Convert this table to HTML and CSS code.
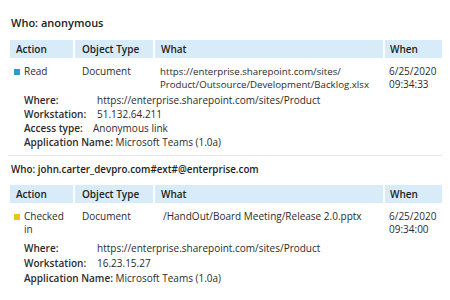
FILE: index.html
```html
<!DOCTYPE html>
<html>
<head>
<meta charset="utf-8">
<link rel="stylesheet" href="styles.css">
</head>
<body>
<section class="who">
  <h2 class="who-title big">Who: anonymous</h2>
  <div class="grid head">
    <div class="hc">Action</div>
    <div class="hc">Object Type</div>
    <div class="hc">What</div>
    <div class="hc">When</div>
  </div>
  <div class="grid row">
    <div class="c action"><span class="sq blue"></span><span class="atext">Read</span></div>
    <div class="c">Document</div>
    <div class="c what">https://enterprise.sharepoint.com/sites/<br>Product/Outsource/Development/Backlog.xlsx</div>
    <div class="c when">6/25/2020<br>09:34:33</div>
  </div>
  <div class="details">
    <div class="dl"><span class="lb w73">Where:</span><span>https://enterprise.sharepoint.com/sites/Product</span></div>
    <div class="dl"><span class="lb w73">Workstation:</span><span>51.132.64.211</span></div>
    <div class="dl"><span class="lb w69">Access type:</span><span>Anonymous link</span></div>
    <div class="dl"><span class="lb">Application Name:</span> <span>Microsoft Teams (1.0a)</span></div>
  </div>
</section>
<hr class="sep">
<section class="who">
  <h2 class="who-title small">Who: john.carter_devpro.com#ext#@enterprise.com</h2>
  <div class="grid head">
    <div class="hc">Action</div>
    <div class="hc">Object Type</div>
    <div class="hc">What</div>
    <div class="hc">When</div>
  </div>
  <div class="grid row">
    <div class="c action"><span class="sq yellow"></span><span class="atext">Checked in</span></div>
    <div class="c">Document</div>
    <div class="c what2">/HandOut/Board Meeting/Release 2.0.pptx</div>
    <div class="c when">6/25/2020<br>09:34:00</div>
  </div>
  <div class="details d2">
    <div class="dl"><span class="lb w73">Where:</span><span>https://enterprise.sharepoint.com/sites/Product</span></div>
    <div class="dl"><span class="lb w73">Workstation:</span><span>16.23.15.27</span></div>
    <div class="dl"><span class="lb">Application Name:</span> <span>Microsoft Teams (1.0a)</span></div>
  </div>
</section>
</body>
</html>
```
FILE: styles.css
```css
html, body {
  margin: 0;
  padding: 0;
  background: #ffffff;
}
body {
  font-family: "Open Sans", "Noto Sans", sans-serif;
  font-size: 10px;
  color: #2b2b2b;
  width: 450px;
  height: 300px;
  overflow: hidden;
}
.who {
  padding: 0 8px 0 10px;
}
.who-title {
  margin: 0;
  font-weight: 600;
  color: #222;
  padding-left: 1px;
}
.who-title.big {
  font-size: 11px;
  line-height: 16px;
  padding-top: 15px;
  margin-bottom: 9px;
}
.who-title.small {
  font-size: 9.8px;
  line-height: 14px;
  padding-top: 7px;
  margin-bottom: 8px;
}
.grid {
  display: grid;
  grid-template-columns: 63px 78px 228px 57px;
  column-gap: 2px;
}
.head .hc {
  background: #d7ecf8;
  height: 18px;
  line-height: 18px;
  padding-left: 6px;
  font-weight: 600;
  color: #222;
}
.head .hc:nth-child(2) { padding-left: 7px; }
.head .hc:nth-child(4) { padding-left: 5px; }
.row {
  padding-top: 7px;
  line-height: 13px;
}
.c:nth-child(2) { padding-left: 7px; }
.what { padding-left: 5px; font-size: 9.7px; }
.what2 { padding-left: 8px; }
.when { padding-left: 4px; }
.action {
  display: flex;
  align-items: flex-start;
  padding-left: 4px;
  padding-right: 6px;
}
.sq {
  flex: none;
  width: 6px;
  height: 6px;
  margin-top: 3.5px;
  margin-right: 4px;
}
.sq.blue { background: #2f9ad0; }
.sq.yellow { background: #efc21a; }
.details {
  padding: 2px 0 0 14px;
  line-height: 14px;
}
.details.d2 {
  padding-top: 5px;
  line-height: 15px;
}
.lb {
  font-weight: 600;
  color: #2b2b2b;
}
.w73 { display: inline-block; width: 73px; }
.w69 { display: inline-block; width: 69px; }
.sep {
  border: 0;
  border-top: 1px solid #e6e6e6;
  margin: 6px 8px 0 8px;
  height: 0;
}
```
